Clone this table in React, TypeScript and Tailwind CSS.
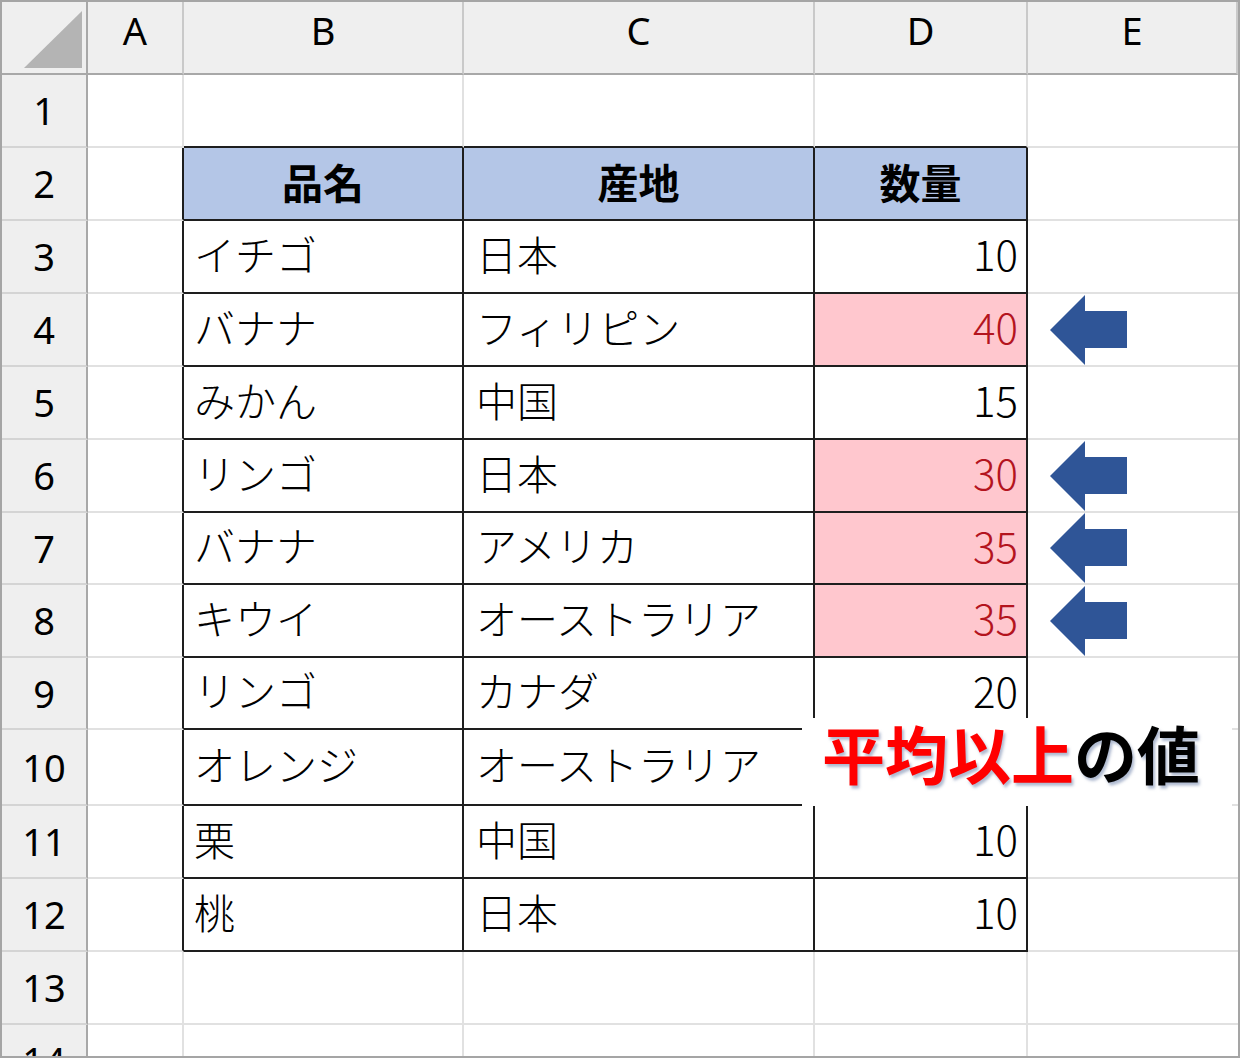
const JP = "font-['Noto_Sans_CJK_JP',sans-serif]";

type Row = { name: string; origin: string; qty: string; hl?: boolean };

const rows: Row[] = [
  { name: 'イチゴ', origin: '日本', qty: '10' },
  { name: 'バナナ', origin: 'フィリピン', qty: '40', hl: true },
  { name: 'みかん', origin: '中国', qty: '15' },
  { name: 'リンゴ', origin: '日本', qty: '30', hl: true },
  { name: 'バナナ', origin: 'アメリカ', qty: '35', hl: true },
  { name: 'キウイ', origin: 'オーストラリア', qty: '35', hl: true },
  { name: 'リンゴ', origin: 'カナダ', qty: '20' },
  { name: 'オレンジ', origin: 'オーストラリア', qty: '' },
  { name: '栗', origin: '中国', qty: '10' },
  { name: '桃', origin: '日本', qty: '10' },
];

const grid = 'border-r-2 border-b-2 border-[#e1e1e1] bg-white';
const tbl = 'border-r-2 border-b-2 border-[#1e1e1e]';
const rowHead =
  "flex items-center justify-center bg-[#efefef] border-r-2 border-r-[#a8a8a8] border-b-2 border-b-[#d4d4d4] text-[38px] text-black font-['Noto_Sans',sans-serif]";
const colHead =
  "flex items-center justify-center pb-[14px] bg-[#efefef] border-r-2 border-r-[#c9c9c9] border-b-2 border-b-[#a8a8a8] text-[38px] text-black font-['Noto_Sans',sans-serif]";

function Arrow() {
  return (
    <svg width="78" height="72" viewBox="0 0 78 72">
      <polygon points="0,36 35,1 35,17 77,17 77,54 35,54 35,71" fill="#2f5597" />
    </svg>
  );
}

export default function App() {
  return (
    <div className="w-[1240px] h-[1058px] overflow-hidden bg-white">
      <div className="relative w-[1240px] h-[1058px] overflow-hidden border-2 border-[#a5a5a5]">
        <div className="grid grid-cols-[86px_96px_280px_351px_213px_210px] grid-rows-[73px_73px_73px_73px_73px_73px_73px_72px_73px_72px_76px_73px_73px_73px_73px]">
          {/* column headers */}
          <div className="flex items-end justify-end bg-[#efefef] border-r-2 border-b-2 border-[#a8a8a8] pr-[4px] pb-[5px]">
            <svg width="58" height="57" viewBox="0 0 58 57">
              <polygon points="0,57 58,57 58,0" fill="#b4b4b4" />
            </svg>
          </div>
          <div className={colHead}>A</div>
          <div className={colHead}>B</div>
          <div className={colHead}>C</div>
          <div className={colHead}>D</div>
          <div className={colHead}>E</div>

          {/* row 1 */}
          <div className={rowHead}>1</div>
          <div className={grid} />
          <div className="border-r-2 border-r-[#e1e1e1] border-b-2 border-b-[#1e1e1e]" />
          <div className="border-r-2 border-r-[#e1e1e1] border-b-2 border-b-[#1e1e1e]" />
          <div className="border-r-2 border-r-[#e1e1e1] border-b-2 border-b-[#1e1e1e]" />
          <div className="border-b-2 border-[#e1e1e1]" />

          {/* row 2 header */}
          <div className={rowHead}>2</div>
          <div className="border-r-2 border-r-[#1e1e1e] border-b-2 border-b-[#e1e1e1]" />
          <div className={`${tbl} bg-[#b4c6e7] flex items-center justify-center pb-[4px] text-[41px] font-bold text-black ${JP}`}>品名</div>
          <div className={`${tbl} bg-[#b4c6e7] flex items-center justify-center pb-[4px] text-[41px] font-bold text-black ${JP}`}>産地</div>
          <div className={`${tbl} bg-[#b4c6e7] flex items-center justify-center pb-[4px] text-[41px] font-bold text-black ${JP}`}>数量</div>
          <div className="border-b-2 border-[#e1e1e1]" />

          {rows.map((r, i) => (
            <div key={i} className="contents">
              <div className={rowHead}>{i + 3}</div>
              <div className="border-r-2 border-r-[#1e1e1e] border-b-2 border-b-[#e1e1e1]" />
              <div className={`${tbl} flex items-center pl-[10px] pb-[6px] text-[41px] font-light text-black ${JP}`}>{r.name}</div>
              <div className={`${tbl} flex items-center pl-[12px] pb-[6px] text-[41px] font-light text-black ${JP}`}>{r.origin}</div>
              <div
                className={`${tbl} flex items-center justify-end pr-[8px] pb-[8px] text-[42px] font-light ${JP} ${
                  r.hl ? 'bg-[#ffc7ce] text-[#b4141e]' : 'bg-white text-black'
                }`}
              >
                {r.qty}
              </div>
              <div className="border-b-2 border-[#e1e1e1] flex items-center pl-[22px]">
                {r.hl && <Arrow />}
              </div>
            </div>
          ))}

          {/* rows 13, 14 */}
          {[13, 14].map((n) => (
            <div key={n} className="contents">
              <div className={rowHead}>{n}</div>
              <div className={grid} />
              <div className={grid} />
              <div className={grid} />
              <div className={grid} />
              <div className="border-b-2 border-[#e1e1e1]" />
            </div>
          ))}
        </div>

        {/* callout label */}
        <div
          className={`absolute left-[800px] top-[716px] w-[430px] h-[88px] bg-white flex items-center pl-[20px] pb-[22px] text-[63px] font-bold leading-none ${JP} [text-shadow:2px_3px_3px_rgba(110,130,170,0.55)]`}
        >
          <span className="text-[#ff0000]">平均以上</span>
          <span className="text-black">の値</span>
        </div>
      </div>
    </div>
  );
}
